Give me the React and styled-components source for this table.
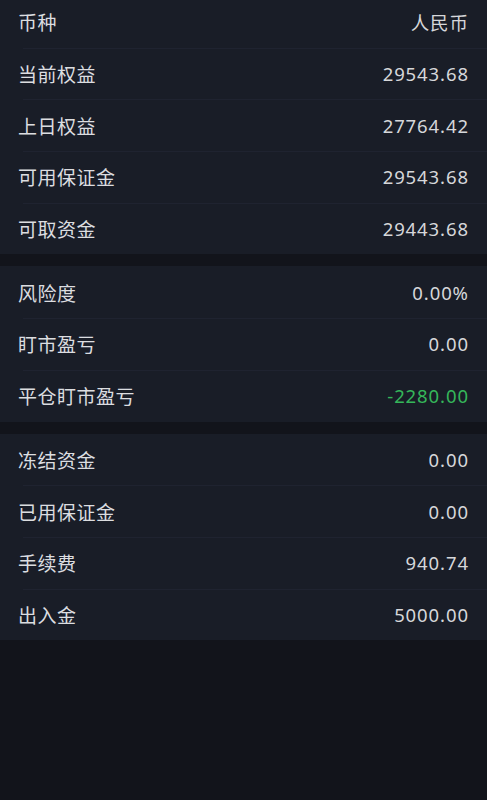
import React from 'react'
import styled, { createGlobalStyle } from 'styled-components'

const GlobalStyle = createGlobalStyle`
  html, body {
    margin: 0;
    padding: 0;
    background-color: #12141b;
  }
  body {
    font-family: "Noto Sans CJK SC", "Noto Sans", sans-serif;
    -webkit-font-smoothing: antialiased;
  }
`
const Page = styled.div`
  display: flex;
  flex-direction: column;
  gap: 12px;
  min-height: 800px;
  margin-top: -4px;
  background-color: #12141b;
`
const Section = styled.section`
  display: flex;
  flex-direction: column;
  background-color: #191d27;
`
const Row = styled.div`
  position: relative;
  display: flex;
  align-items: center;
  justify-content: space-between;
  height: 51.7px;
  padding: 0 19px 0 18px;
  box-sizing: border-box;

  & + &::before {
    content: '';
    position: absolute;
    top: 0;
    left: 23px;
    right: 0;
    height: 1px;
    background-color: #1f2330;
  }
`
const Label = styled.span`
  font-size: 19px;
  color: #dcdde0;
  letter-spacing: 0.5px;
`
const Value = styled.span`
  font-family: "Noto Sans", "Noto Sans CJK SC", sans-serif;
  font-size: 18.5px;
  letter-spacing: 0.9px;
  margin-right: -0.9px;
  color: ${(props) => (props.green ? '#35b65a' : '#d6d7da')};
`

const sections = [
  [
    ['币种', '人民币'],
    ['当前权益', '29543.68'],
    ['上日权益', '27764.42'],
    ['可用保证金', '29543.68'],
    ['可取资金', '29443.68'],
  ],
  [
    ['风险度', '0.00%'],
    ['盯市盈亏', '0.00'],
    ['平仓盯市盈亏', '-2280.00', true],
  ],
  [
    ['冻结资金', '0.00'],
    ['已用保证金', '0.00'],
    ['手续费', '940.74'],
    ['出入金', '5000.00'],
  ],
]

export default function App() {
  return (
    <>
      <GlobalStyle />
      <Page>
        {sections.map((rows, i) => (
          <Section key={i}>
            {rows.map(([label, value, green]) => (
              <Row key={label}>
                <Label>{label}</Label>
                <Value green={green}>{value}</Value>
              </Row>
            ))}
          </Section>
        ))}
      </Page>
    </>
  )
}
